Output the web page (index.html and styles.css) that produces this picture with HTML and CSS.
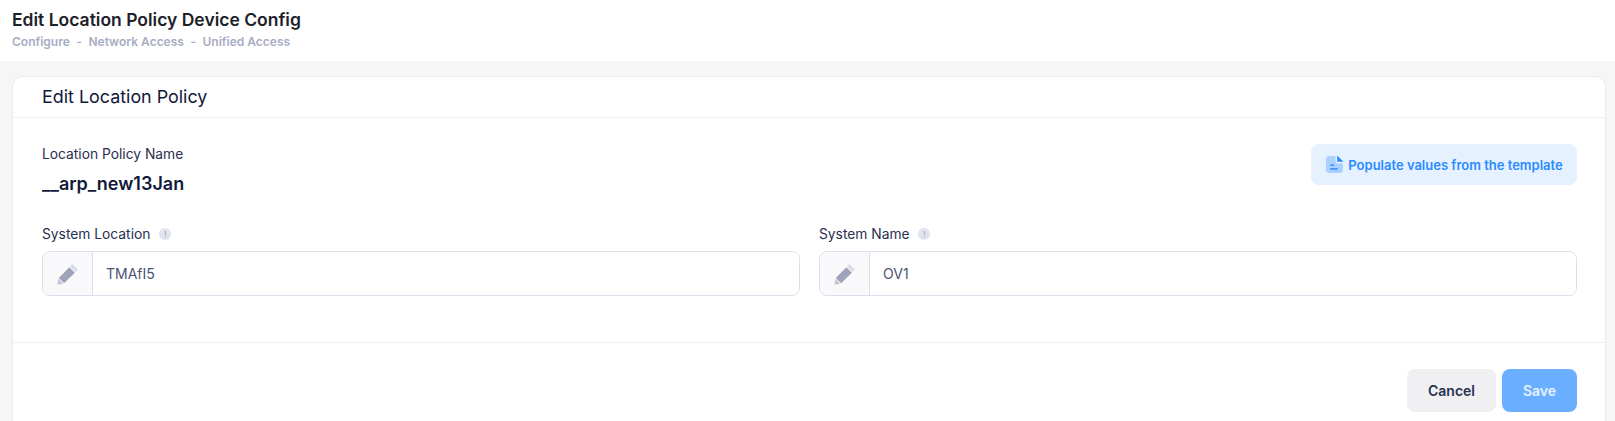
FILE: index.html
```html
<!DOCTYPE html>
<html lang="en">
<head>
    <meta charset="UTF-8">
    <meta name="viewport" content="width=device-width, initial-scale=1.0">
    <title>Edit Location Policy Device Config</title>
    <link rel="stylesheet" href="styles.css">
</head>
<body>
    <div class="page-header">
        <h1>Edit Location Policy Device Config</h1>
        <div class="crumbs">
            <span>Configure</span><span class="dash">-</span><span>Network Access</span><span class="dash">-</span><span>Unified Access</span>
        </div>
    </div>

    <div class="content">
        <div class="card">
            <div class="card-head">Edit Location Policy</div>
            <div class="card-body">
                <div class="name-row">
                    <div>
                        <div class="label">Location Policy Name</div>
                        <div class="policy-name">__arp_new13Jan</div>
                    </div>
                    <button class="btn-template" type="button">
                        <svg width="19" height="19" viewBox="0 0 18 18">
                            <path d="M4 1h6v5a2 2 0 0 0 2 2h5v6a3 3 0 0 1-3 3H4a3 3 0 0 1-3-3V4a3 3 0 0 1 3-3z" fill="#a9d0ff"/>
                            <path d="M11.5 0.5 17.5 6.5H11.5z" fill="#2b8bff"/>
                            <rect x="5" y="9" width="3.5" height="1.4" fill="#2b8bff"/>
                            <rect x="5" y="12.5" width="7" height="1.4" fill="#2b8bff"/>
                        </svg>
                        Populate values from the template
                    </button>
                </div>
                <div class="fields">
                    <div class="field">
                        <div class="label">System Location <span class="info">!</span></div>
                        <div class="input-group">
                            <span class="addon">
                                <svg width="22" height="22" viewBox="0 0 20 20">
                                    <path d="M14 1 19 6 16.8 8.2 11.8 3.2z" fill="#d9dbe6"/>
                                    <path d="M11.2 3.8 16.2 8.8 6.4 18.4 1.6 13.6z" fill="#9ea3b8"/>
                                    <path d="M1.2 14.4 5.6 18.8 0.4 19.8z" fill="#c3c6d4"/>
                                </svg>
                            </span>
                            <input type="text" value="TMAfI5">
                        </div>
                    </div>
                    <div class="field">
                        <div class="label">System Name <span class="info">!</span></div>
                        <div class="input-group">
                            <span class="addon">
                                <svg width="22" height="22" viewBox="0 0 20 20">
                                    <path d="M14 1 19 6 16.8 8.2 11.8 3.2z" fill="#d9dbe6"/>
                                    <path d="M11.2 3.8 16.2 8.8 6.4 18.4 1.6 13.6z" fill="#9ea3b8"/>
                                    <path d="M1.2 14.4 5.6 18.8 0.4 19.8z" fill="#c3c6d4"/>
                                </svg>
                            </span>
                            <input type="text" value="OV1">
                        </div>
                    </div>
                </div>
            </div>
            <div class="card-foot">
                <button class="btn btn-cancel" type="button">Cancel</button>
                <button class="btn btn-save" type="button">Save</button>
            </div>
        </div>
    </div>
</body>
</html>
```

FILE: styles.css
```css
/* General Styles */
html, body {
    height: 100%;
}

body {
    margin: 0;
    font-family: Inter, "Liberation Sans", sans-serif;
    background-color: #f6f6f6;
    overflow: hidden;
    display: flex;
    flex-direction: column;
}

.page-header {
    height: 61px;
    box-sizing: border-box;
    background: #fff;
    padding: 9px 12px 0;
}

.page-header h1 {
    margin: 0;
    font-size: 17.5px;
    line-height: 22px;
    font-weight: 600;
    color: #1d2129;
}

.crumbs {
    margin-top: 3px;
    font-size: 12px;
    line-height: 16px;
    font-weight: 600;
    color: #a8acc4;
}

.crumbs .dash {
    margin: 0 6.5px;
}

.content {
    flex: 1;
    padding: 15px 9px 0 12px;
    min-height: 0;
}

.card {
    height: 100%;
    box-sizing: border-box;
    background: #fff;
    border: 1px solid #e9eaee;
    border-bottom: none;
    border-radius: 10px 10px 0 0;
}

.card-head {
    height: 41px;
    box-sizing: border-box;
    padding: 0 29px;
    line-height: 40px;
    font-size: 17.9px;
    color: #12183a;
    border-bottom: 1px solid #eff0f3;
}

.card-body {
    height: 225px;
    box-sizing: border-box;
    padding: 27px 28px 0 29px;
    border-bottom: 1px solid #eff0f3;
}

.name-row {
    display: flex;
    justify-content: space-between;
    height: 67px;
}

.label {
    font-size: 13.8px;
    line-height: 18px;
    color: #2a3050;
}

.policy-name {
    margin-top: 10px;
    font-size: 18px;
    line-height: 22px;
    font-weight: 600;
    color: #12183a;
}

.btn-template {
    height: 41px;
    width: 266px;
    margin-top: -1px;
    border: none;
    border-radius: 8px;
    background: #e6f1ff;
    color: #2b8bff;
    font-family: inherit;
    font-size: 13px;
    font-weight: 600;
    display: flex;
    align-items: center;
    justify-content: center;
    gap: 4px;
    padding: 0;
}

.fields {
    display: grid;
    grid-template-columns: 1fr 1fr;
    gap: 19px;
    margin-top: 13px;
}

.info {
    display: inline-block;
    width: 12px;
    height: 12px;
    margin-left: 5px;
    border-radius: 50%;
    background: #e1e4ec;
    color: #9298ae;
    font-size: 8px;
    line-height: 12px;
    text-align: center;
    vertical-align: 2px;
}

.input-group {
    display: flex;
    height: 45px;
    box-sizing: border-box;
    margin-top: 8px;
    border: 1px solid #dcdeeb;
    border-radius: 8px;
    overflow: hidden;
}

.addon {
    width: 49px;
    flex: none;
    display: flex;
    align-items: center;
    justify-content: center;
    background: #f9f9fb;
    border-right: 1px solid #dcdeeb;
}

.input-group input {
    flex: 1;
    min-width: 0;
    border: none;
    outline: none;
    padding: 0 13px;
    font-family: inherit;
    font-size: 14px;
    color: #4a5272;
}

.card-foot {
    display: flex;
    justify-content: flex-end;
    gap: 6px;
    padding: 26px 28px 0 0;
}

.btn {
    height: 43px;
    border: none;
    border-radius: 8px;
    font-family: inherit;
    font-size: 14px;
    font-weight: 600;
    padding: 0;
}

.btn-cancel {
    width: 89px;
    background: #f0f0f3;
    color: #2a3050;
}

.btn-save {
    width: 75px;
    background: #6aafff;
    color: #e6f1ff;
}
```
